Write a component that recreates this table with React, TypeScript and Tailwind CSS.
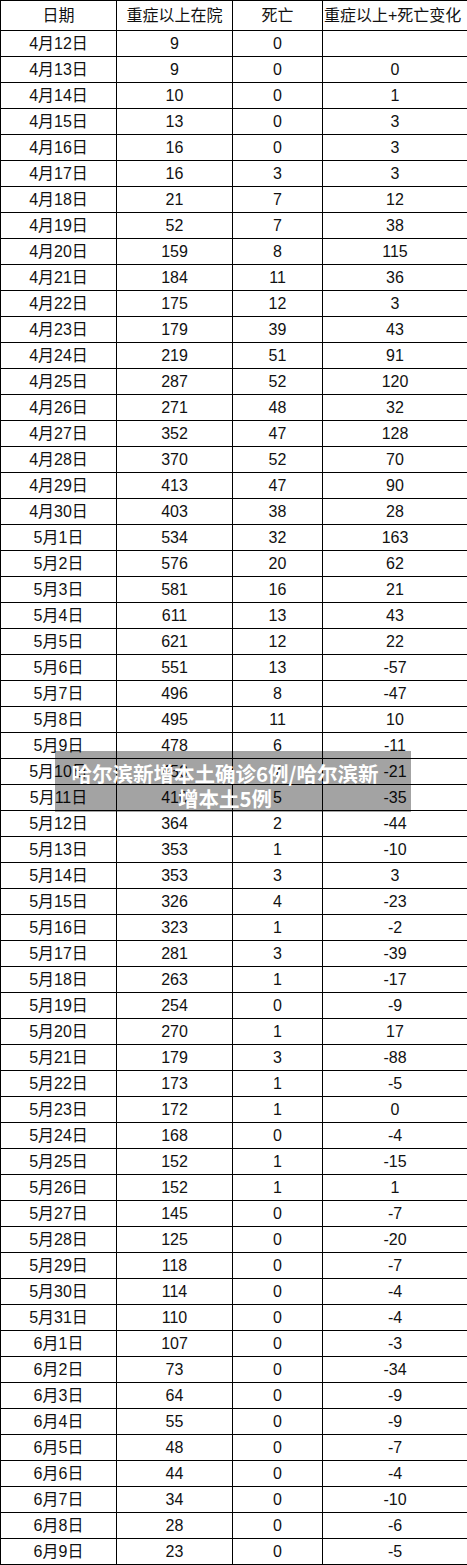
const rows: [string, number, number, number | null][] = [
  ["4月12日", 9, 0, null],
  ["4月13日", 9, 0, 0],
  ["4月14日", 10, 0, 1],
  ["4月15日", 13, 0, 3],
  ["4月16日", 16, 0, 3],
  ["4月17日", 16, 3, 3],
  ["4月18日", 21, 7, 12],
  ["4月19日", 52, 7, 38],
  ["4月20日", 159, 8, 115],
  ["4月21日", 184, 11, 36],
  ["4月22日", 175, 12, 3],
  ["4月23日", 179, 39, 43],
  ["4月24日", 219, 51, 91],
  ["4月25日", 287, 52, 120],
  ["4月26日", 271, 48, 32],
  ["4月27日", 352, 47, 128],
  ["4月28日", 370, 52, 70],
  ["4月29日", 413, 47, 90],
  ["4月30日", 403, 38, 28],
  ["5月1日", 534, 32, 163],
  ["5月2日", 576, 20, 62],
  ["5月3日", 581, 16, 21],
  ["5月4日", 611, 13, 43],
  ["5月5日", 621, 12, 22],
  ["5月6日", 551, 13, -57],
  ["5月7日", 496, 8, -47],
  ["5月8日", 495, 11, 10],
  ["5月9日", 478, 6, -11],
  ["5月10日", 450, 7, -21],
  ["5月11日", 410, 5, -35],
  ["5月12日", 364, 2, -44],
  ["5月13日", 353, 1, -10],
  ["5月14日", 353, 3, 3],
  ["5月15日", 326, 4, -23],
  ["5月16日", 323, 1, -2],
  ["5月17日", 281, 3, -39],
  ["5月18日", 263, 1, -17],
  ["5月19日", 254, 0, -9],
  ["5月20日", 270, 1, 17],
  ["5月21日", 179, 3, -88],
  ["5月22日", 173, 1, -5],
  ["5月23日", 172, 1, 0],
  ["5月24日", 168, 0, -4],
  ["5月25日", 152, 1, -15],
  ["5月26日", 152, 1, 1],
  ["5月27日", 145, 0, -7],
  ["5月28日", 125, 0, -20],
  ["5月29日", 118, 0, -7],
  ["5月30日", 114, 0, -4],
  ["5月31日", 110, 0, -4],
  ["6月1日", 107, 0, -3],
  ["6月2日", 73, 0, -34],
  ["6月3日", 64, 0, -9],
  ["6月4日", 55, 0, -9],
  ["6月5日", 48, 0, -7],
  ["6月6日", 44, 0, -4],
  ["6月7日", 34, 0, -10],
  ["6月8日", 28, 0, -6],
  ["6月9日", 23, 0, -5],
];

const cell = "border border-black p-0 text-center align-middle";

export default function App() {
  return (
    <div className="relative w-[467px] bg-white text-[#111] font-['Liberation_Sans','Noto_Sans_CJK_SC',sans-serif] text-[16px]">
      <table className="w-[467px] table-fixed border-collapse">
        <colgroup>
          <col className="w-[116px]" />
          <col className="w-[116px]" />
          <col className="w-[90px]" />
          <col className="w-[145px]" />
        </colgroup>
        <thead>
          <tr className="h-[30px]">
            <th className={cell + " font-normal"}>日期</th>
            <th className={cell + " font-normal"}>重症以上在院</th>
            <th className={cell + " font-normal"}>死亡</th>
            <th className="border border-black p-0 pl-px text-left align-middle font-normal overflow-hidden whitespace-nowrap">
              重症以上+死亡变化
            </th>
          </tr>
        </thead>
        <tbody>
          {rows.map(([d, a, b, c]) => (
            <tr key={d} className="h-[26px]">
              <td className={cell}>{d}</td>
              <td className={cell}>{a}</td>
              <td className={cell}>{b}</td>
              <td className={cell}>{c === null ? "" : c}</td>
            </tr>
          ))}
        </tbody>
      </table>

      {/* caption overlay */}
      <div className="absolute left-[55px] top-[751px] w-[356px] h-[61px] bg-[rgba(0,0,0,0.36)] pt-[10px] pr-[16px] text-center text-white font-bold text-[20.5px] leading-[25px] font-['Noto_Sans_CJK_SC',sans-serif]">
        哈尔滨新增本土确诊6例/哈尔滨新
        <br />
        增本土5例
      </div>
    </div>
  );
}
